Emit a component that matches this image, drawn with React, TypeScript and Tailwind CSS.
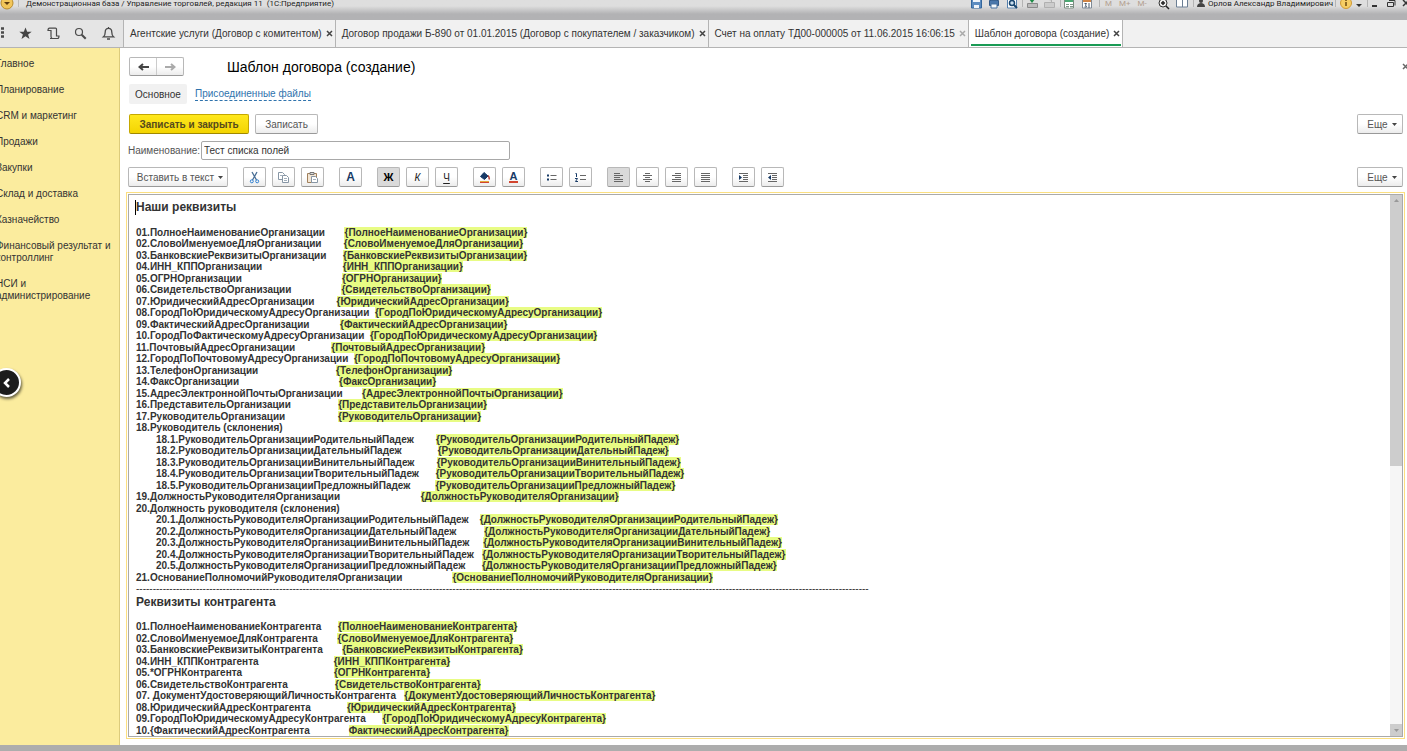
import clsx from "clsx";
import { FC, ReactNode } from "react";

interface ITab {
  title: string;
  active?: boolean;
  muted?: boolean;
}

interface IRow {
  label: string;
  gap?: number;
  field?: string;
  nested?: boolean;
}

const tabs: ITab[] = [
  { title: "Агентские услуги (Договор с комитентом)" },
  { title: "Договор продажи Б-890 от 01.01.2015 (Договор с покупателем / заказчиком)" },
  { title: "Счет на оплату ТД00-000005 от 11.06.2015 16:06:15", muted: true },
  { title: "Шаблон договора (создание)", active: true },
];

const sections = [
  "Главное",
  "Планирование",
  "CRM и маркетинг",
  "Продажи",
  "Закупки",
  "Склад и доставка",
  "Казначейство",
  "Финансовый результат и контроллинг",
  "НСИ и администрирование",
];

// gap is the number of spaces typed between the label and the field
const ownRows: IRow[] = [
  { label: "01.ПолноеНаименованиеОрганизации", gap: 7, field: "{ПолноеНаименованиеОрганизации}" },
  { label: "02.СловоИменуемоеДляОрганизации", gap: 8, field: "{СловоИменуемоеДляОрганизации}" },
  { label: "03.БанковскиеРеквизитыОрганизации", gap: 6, field: "{БанковскиеРеквизитыОрганизации}" },
  { label: "04.ИНН_КППОрганизации", gap: 29, field: "{ИНН_КППОрганизации}" },
  { label: "05.ОГРНОрганизации", gap: 36, field: "{ОГРНОрганизации}" },
  { label: "06.СвидетельствоОрганизации", gap: 18, field: "{СвидетельствоОрганизации}" },
  { label: "07.ЮридическийАдресОрганизации", gap: 8, field: "{ЮридическийАдресОрганизации}" },
  { label: "08.ГородПоЮридическомуАдресуОрганизации", gap: 2, field: "{ГородПоЮридическомуАдресуОрганизации}" },
  { label: "09.ФактическийАдресОрганизации", gap: 11, field: "{ФактическийАдресОрганизации}" },
  { label: "10.ГородПоФактическомуАдресуОрганизации", gap: 2, field: "{ГородПоЮридическомуАдресуОрганизации}" },
  { label: "11.ПочтовыйАдресОрганизации", gap: 13, field: "{ПочтовыйАдресОрганизации}" },
  { label: "12.ГородПоПочтовомуАдресуОрганизации", gap: 2, field: "{ГородПоПочтовомуАдресуОрганизации}" },
  { label: "13.ТелефонОрганизации", gap: 28, field: "{ТелефонОрганизации}" },
  { label: "14.ФаксОрганизации", gap: 36, field: "{ФаксОрганизации}" },
  { label: "15.АдресЭлектроннойПочтыОрганизации", gap: 7, field: "{АдресЭлектроннойПочтыОрганизации}" },
  { label: "16.ПредставительОрганизации", gap: 17, field: "{ПредставительОрганизации}" },
  { label: "17.РуководительОрганизации", gap: 19, field: "{РуководительОрганизации}" },
  { label: "18.Руководитель (склонения)" },
  { label: "18.1.РуководительОрганизацииРодительныйПадеж", gap: 8, field: "{РуководительОрганизацииРодительныйПадеж}", nested: true },
  { label: "18.2.РуководительОрганизацииДательныйПадеж", gap: 13, field: "{РуководительОрганизацииДательныйПадеж}", nested: true },
  { label: "18.3.РуководительОрганизацииВинительныйПадеж", gap: 8, field: "{РуководительОрганизацииВинительныйПадеж}", nested: true },
  { label: "18.4.РуководительОрганизацииТворительныйПадеж", gap: 6, field: "{РуководительОрганизацииТворительныйПадеж}", nested: true },
  { label: "18.5.РуководительОрганизацииПредложныйПадеж", gap: 9, field: "{РуководительОрганизацииПредложныйПадеж}", nested: true },
  { label: "19.ДолжностьРуководителяОрганизации", gap: 29, field: "{ДолжностьРуководителяОрганизации}" },
  { label: "20.Должность руководителя (склонения)" },
  { label: "20.1.ДолжностьРуководителяОрганизацииРодительныйПадеж", gap: 4, field: "{ДолжностьРуководителяОрганизацииРодительныйПадеж}", nested: true },
  { label: "20.2.ДолжностьРуководителяОрганизацииДательныйПадеж", gap: 10, field: "{ДолжностьРуководителяОрганизацииДательныйПадеж}", nested: true },
  { label: "20.3.ДолжностьРуководителяОрганизацииВинительныйПадеж", gap: 5, field: "{ДолжностьРуководителяОрганизацииВинительныйПадеж}", nested: true },
  { label: "20.4.ДолжностьРуководителяОрганизацииТворительныйПадеж", gap: 3, field: "{ДолжностьРуководителяОрганизацииТворительныйПадеж}", nested: true },
  { label: "20.5.ДолжностьРуководителяОрганизацииПредложныйПадеж", gap: 6, field: "{ДолжностьРуководителяОрганизацииПредложныйПадеж}", nested: true },
  { label: "21.ОснованиеПолномочийРуководителяОрганизации", gap: 18, field: "{ОснованиеПолномочийРуководителяОрганизации}" },
];

const partnerRows: IRow[] = [
  { label: "01.ПолноеНаименованиеКонтрагента", gap: 6, field: "{ПолноеНаименованиеКонтрагента}" },
  { label: "02.СловоИменуемоеДляКонтрагента", gap: 7, field: "{СловоИменуемоеДляКонтрагента}" },
  { label: "03.БанковскиеРеквизитыКонтрагента", gap: 7, field: "{БанковскиеРеквизитыКонтрагента}" },
  { label: "04.ИНН_КППКонтрагента", gap: 27, field: "{ИНН_КППКонтрагента}" },
  { label: "05.*ОГРНКонтрагента", gap: 33, field: "{ОГРНКонтрагента}" },
  { label: "06.СвидетельствоКонтрагента", gap: 17, field: "{СвидетельствоКонтрагента}" },
  { label: "07. ДокументУдостоверяющийЛичностьКонтрагента", gap: 3, field: "{ДокументУдостоверяющийЛичностьКонтрагента}" },
  { label: "08.ЮридическийАдресКонтрагента", gap: 13, field: "{ЮридическийАдресКонтрагента}" },
  { label: "09.ГородПоЮридическомуАдресуКонтрагента", gap: 6, field: "{ГородПоЮридическомуАдресуКонтрагента}" },
  { label: "10.{ФактическийАдресКонтрагента", gap: 14, field: "ФактическийАдресКонтрагента}" },
];

const Rows: FC<{ rows: IRow[] }> = ({ rows }) => (
  <>
    {rows.map((row) => (
      <p key={row.label} className={clsx("whitespace-pre", row.nested && "pl-5")}>
        {row.label}
        {row.field && (
          <>
            {" ".repeat(row.gap ?? 1)}
            <span className="bg-[#e8fc84]">{row.field}</span>
          </>
        )}
      </p>
    ))}
  </>
);

const Caret: FC = () => (
  <svg viewBox="0 0 5 3" className="h-[3px] w-[5px] shrink-0" fill="#444" aria-hidden="true">
    <path d="M0 0h5L2.500 3z" />
  </svg>
);

const Cross: FC = () => (
  <svg viewBox="0 0 7 7" className="size-[7px] shrink-0" fill="none" stroke="currentColor" strokeWidth="1.5" aria-hidden="true">
    <path d="M1 1l5 5M6 1L1 6" />
  </svg>
);

const buttonLook =
  "flex h-5 shrink-0 items-center justify-center rounded-[2px] border border-[#b8b8b8] border-b-[#999] bg-linear-to-b from-white from-50% to-[#ececec] whitespace-nowrap text-[#555]";

const MoreButton: FC = () => (
  <button type="button" className={clsx(buttonLook, "ml-auto w-[46px] gap-1 pl-1")}>
    Еще <Caret />
  </button>
);

interface IToolButton {
  label: string;
  pressed?: boolean;
  children: ReactNode;
}

const ToolButton: FC<IToolButton> = ({ label, pressed, children }) => (
  <button
    type="button"
    aria-label={label}
    aria-pressed={pressed}
    className={clsx(
      "flex h-5 w-[23px] shrink-0 items-center justify-center rounded-[2px] border border-[#b8b8b8] border-b-[#999] text-[#222]",
      pressed ? "bg-[#dadada]" : "bg-linear-to-b from-white from-50% to-[#ececec]"
    )}
  >
    {children}
  </button>
);

const ToolGroup: FC<{ children: ReactNode }> = ({ children }) => (
  <div className="flex gap-1.5">{children}</div>
);

const Glyph: FC<{ children: ReactNode }> = ({ children }) => (
  <svg viewBox="0 0 13 13" className="size-[13px]" fill="none" stroke="#666" aria-hidden="true">
    {children}
  </svg>
);

const TitleBar: FC = () => (
  <header className="h-5 shrink-0 overflow-hidden bg-linear-to-b from-[#dedede] from-30% to-[#b2b2b4] to-70% font-[Roboto,'Liberation_Sans',sans-serif] text-[8px] leading-2 text-[#222]">
    <div className="flex h-2 items-center whitespace-nowrap">
      <svg viewBox="0 0 26 12" className="h-3 w-[26px] shrink-0" aria-hidden="true">
        <circle cx="7" cy="5" r="6" fill="#f2c65a" stroke="#b98c2c" />
        <path d="M4 4h6L7 7z" fill="#5b3a10" />
        <path d="M18.500 0v9" stroke="#bbb" />
      </svg>
      <span className="grow">
        Демонстрационная база / Управление торговлей, редакция 11&nbsp; (1С:Предприятие)
      </span>
      <svg viewBox="0 0 136 12" className="h-3 w-[136px] shrink-0" fill="none" aria-hidden="true">
        <path d="M6.500 -1h10v11h-10z" fill="#5c8cc0" stroke="#33669c" />
        <path d="M8 -1h7v5H8zM9 7h5v3H9z" fill="#eef4fa" />
        <path d="M24.500 2.500h9v5h-9z" fill="#4b78ac" stroke="#335a88" />
        <path d="M26 -1h6v3h-6zM26 6h6v4h-6z" fill="#f4f8fb" stroke="#47709f" />
        <path d="M42.500 -1h9v11h-9z" fill="#fff" stroke="#5580ad" />
        <circle cx="47" cy="5" r="2.500" fill="#c9dded" stroke="#17456f" strokeWidth="1.500" />
        <path d="M49 7l3 3" stroke="#17456f" strokeWidth="2" />
        <path d="M57.500 0v9M95.500 0v9M134.500 0v9" stroke="#b4b4b4" />
        <path d="M62.500 5.500h10v4h-10z" fill="#bbb" stroke="#8a8a8a" />
        <path d="M64 1h6L67 5z" fill="#1d8b46" />
        <path d="M79.500 4.500h10v5h-10zM81.500 0h5v4" fill="#ccc" stroke="#b0b0b0" />
        <path d="M99.500 -1h9v11h-9z" fill="#fff" stroke="#7b8d80" />
        <path d="M100 0h8v4h-8z" fill="#4aa872" />
        <path d="M101 6.500h7M101 8.500h7" stroke="#7e9588" />
        <path d="M104.500 5v5" stroke="#fff" />
        <path d="M117.500 -1h9v11h-9z" fill="#fff" stroke="#7e8995" />
        <path d="M118 0h8v4h-8z" fill="#cf8445" />
        <path d="M119.500 5.500h2l-1 1.500 1 2h-2M124 5v5" stroke="#4a5a6c" />
      </svg>
      <div className="flex w-[55px] shrink-0 gap-[7px] pl-1 text-[#b39f90]">
        <span>M</span>
        <span>M+</span>
        <span>M-</span>
      </div>
      <svg viewBox="0 0 50 12" className="h-3 w-[50px] shrink-0" fill="none" aria-hidden="true">
        <circle cx="7" cy="5" r="4" fill="#eee" stroke="#333" />
        <path d="M5 5h4M7 3v4M10 8l3 3" stroke="#222" strokeWidth="1.500" />
        <path d="M20.500 -1h11v10h-11zM26.500 0v9" fill="#fff" stroke="#6c7f94" />
        <path d="M37.500 0v9" stroke="#b4b4b4" />
        <circle cx="45" cy="3" r="2" fill="#444" />
        <path d="M41 9c0-3 2-4 4-4s4 1 4 4z" fill="#444" />
      </svg>
      <span className="w-[129px] shrink-0 pl-0.5">Орлов Александр Владимирович</span>
      <svg viewBox="0 0 72 12" className="h-3 w-[72px] shrink-0" fill="none" aria-hidden="true">
        <path d="M0.500 0v9M32.500 0v9" stroke="#b4b4b4" />
        <circle cx="11" cy="5" r="5.500" fill="#f6cd63" stroke="#d09a36" />
        <path d="M11 4v4M11 1.500v1.500" stroke="#6f4a10" strokeWidth="1.500" />
        <path d="M21 6h6l-3 3z" fill="#333" />
        <path d="M37 8h5" stroke="#333" strokeWidth="2" />
        <path d="M52.500 4.500h6v4h-6zM54 2.500h6v5" stroke="#333" />
        <path d="M68 2l6 6M74 2l-6 6" stroke="#333" strokeWidth="1.500" />
      </svg>
    </div>
  </header>
);

const TabBar: FC = () => (
  <div className="flex h-7 shrink-0 border-b border-[#b4b4b4] bg-[#f1f1f1]">
    <div className="flex w-[123px] shrink-0 items-center bg-[#e5e5e5]">
      <svg viewBox="0 0 123 27" className="h-[27px] w-[123px]" fill="none" stroke="#4a4a4a" aria-hidden="true">
        <path d="M1 8.500h3M1 12.500h3M1 16.500h3" strokeWidth="2.500" />
        <path d="M25.500 7.500l1.700 4.200h4.500l-3.600 2.900 1.400 4.400-4-2.700-4 2.700 1.400-4.400-3.600-2.900h4.500z" fill="#444" stroke="none" />
        <path d="M50 18.500h7.500c1.500 0 1.500-1 1.500-2.500h-2.500V9c0-.6-.6-.9-1-.9h-6c-1.300 0-1.500 1-1.500 2.400h3v6c0 1.300.4 2 1.500 2" strokeWidth="1.200" />
        <circle cx="79" cy="12" r="3.500" strokeWidth="1.200" />
        <path d="M81.700 14.700l4 4" strokeWidth="2" />
        <path d="M103.500 16.800c1.500-1.200 1.700-2.500 1.700-4.500 0-2.300 1.200-3.900 3.300-3.900s3.300 1.600 3.300 3.900c0 2 .2 3.300 1.700 4.500zM107 19h3M108.500 7v1.500" strokeWidth="1.300" />
      </svg>
    </div>
    <nav className="flex" aria-label="Открытые окна">
      {tabs.map((tab) => (
        <div
          key={tab.title}
          className={clsx(
            "flex items-center gap-1 border-l border-[#b4b4b4] pr-0.5 pl-1.5 last:border-r",
            tab.active && "bg-white"
          )}
        >
          <a
            href="#"
            className={clsx(
              "whitespace-nowrap",
              tab.active && "relative after:absolute after:top-[18px] after:-right-3 after:-left-1 after:h-0.5 after:bg-[#1a9b55]"
            )}
          >
            {tab.title}
          </a>
          <button type="button" aria-label="Закрыть" className={tab.muted ? "text-[#aaa]" : "text-[#444]"}>
            <Cross />
          </button>
        </div>
      ))}
    </nav>
  </div>
);

const Sidebar: FC = () => (
  <aside className="relative w-[120px] shrink-0 border-r border-[#dccb7c] bg-[#fbec9e] pt-2.5">
    <nav className="-ml-1 flex flex-col gap-3.5 leading-3">
      {sections.map((section) => (
        <a key={section} href="#" className="pr-2">
          {section}
        </a>
      ))}
    </nav>
    <button
      type="button"
      aria-label="Свернуть панель"
      className="absolute top-80 -left-2 flex size-[29px] items-center justify-center rounded-full border-2 border-white bg-[#1c1c1c] shadow-[1px_2px_3px_rgba(0,0,0,0.6)]"
    >
      <svg viewBox="0 0 10 12" className="h-3 w-2.5" fill="none" stroke="#fff" strokeWidth="2.500" aria-hidden="true">
        <path d="M7 2L3 6l4 4" />
      </svg>
    </button>
  </aside>
);

const alignLines = [
  { label: "По левому краю", path: "M2 2.500h6M2 4.500h9M2 6.500h6M2 8.500h9M2 10.500h9", pressed: true },
  { label: "По центру", path: "M4 2.500h5M2 4.500h9M4 6.500h5M2 8.500h9M4 10.500h5" },
  { label: "По правому краю", path: "M5 2.500h6M2 4.500h9M5 6.500h6M2 8.500h9M2 10.500h9" },
  { label: "По ширине", path: "M2 2.500h9M2 4.500h9M2 6.500h9M2 8.500h9M2 10.500h9" },
];

const Toolbar: FC = () => (
  <div className="mt-[7px] flex gap-[15px] pr-1 pl-2">
    <button type="button" className={clsx(buttonLook, "w-[100px] gap-1 pl-1")}>
      Вставить в текст <Caret />
    </button>
    <ToolGroup>
      <ToolButton label="Вырезать">
        <Glyph>
          <path d="M4 1l4.500 8M9 1L4.500 9" stroke="#4a6f96" strokeWidth="1.300" />
          <circle cx="3.800" cy="10.300" r="1.500" stroke="#2f7fd0" />
          <circle cx="9.200" cy="10.300" r="1.500" stroke="#2f7fd0" />
        </Glyph>
      </ToolButton>
      <ToolButton label="Копировать">
        <Glyph>
          <path d="M1.500 1.500h4l2 2v5h-6z" fill="#fff" stroke="#8796a5" />
          <path d="M5.500 4.500h4l2 2v5h-6z" fill="#fff" stroke="#8796a5" />
          <path d="M7 7.500h3M7 9.500h3M3 4.500h2" stroke="#a3b0bd" />
        </Glyph>
      </ToolButton>
      <ToolButton label="Вставить">
        <Glyph>
          <path d="M1.500 2.500h9v9h-9z" fill="#f4e6d4" stroke="#a0805c" />
          <path d="M4 1.500h4v2H4z" fill="#ddd" stroke="#777" />
          <path d="M5.500 5.500h4l2 2v4h-6z" fill="#fff" stroke="#8796a5" />
          <path d="M7 8.500h3" stroke="#a3b0bd" />
        </Glyph>
      </ToolButton>
    </ToolGroup>
    <ToolButton label="Шрифт">
      <span className="text-[12px] font-bold text-[#173a66]">A</span>
    </ToolButton>
    <ToolGroup>
      <ToolButton label="Жирный" pressed>
        <span className="text-[11px] font-bold text-black">Ж</span>
      </ToolButton>
      <ToolButton label="Курсив">
        <span className="italic">К</span>
      </ToolButton>
      <ToolButton label="Подчеркнутый">
        <span className="underline underline-offset-2">Ч</span>
      </ToolButton>
    </ToolGroup>
    <ToolGroup>
      <ToolButton label="Цвет фона">
        <Glyph>
          <path d="M6 1.500l4 3.500L6.500 8.500 2.500 5.500z" fill="#173a66" stroke="#173a66" />
          <path d="M10 4.500c1.300 1 1.300 2 1.300 4" stroke="#b5382c" strokeWidth="1.500" />
          <path d="M2 10.500h9" stroke="#e2a93c" />
          <path d="M2 11.500h9" stroke="#d2452f" />
        </Glyph>
      </ToolButton>
      <ToolButton label="Цвет текста">
        <span className="border-b-2 border-[#d2452f] px-px text-[11px] leading-[10px] font-bold text-[#173a66]">A</span>
      </ToolButton>
    </ToolGroup>
    <ToolGroup>
      <ToolButton label="Маркированный список">
        <Glyph>
          <path d="M5.500 4.500h6M5.500 8.500h6" />
          <path d="M2 3.500h2v2H2zM2 7.500h2v2H2z" fill="#173a66" stroke="none" />
        </Glyph>
      </ToolButton>
      <ToolButton label="Нумерованный список">
        <Glyph>
          <path d="M6 4.500h6M6 8.500h6" />
          <path d="M1.500 2.500h1v3.500M1 7.500h2.500L1.500 10.500H4" stroke="#173a66" />
        </Glyph>
      </ToolButton>
    </ToolGroup>
    <ToolGroup>
      {alignLines.map((item) => (
        <ToolButton key={item.label} label={item.label} pressed={item.pressed}>
          <Glyph>
            <path d={item.path} />
          </Glyph>
        </ToolButton>
      ))}
    </ToolGroup>
    <ToolGroup>
      <ToolButton label="Увеличить отступ">
        <Glyph>
          <path d="M2 2.500h9M6 4.500h5M6 6.500h5M6 8.500h5M2 10.500h9" />
          <path d="M2 4l3 2.500L2 9z" fill="#173a66" stroke="none" />
        </Glyph>
      </ToolButton>
      <ToolButton label="Уменьшить отступ">
        <Glyph>
          <path d="M2 2.500h9M6 4.500h5M6 6.500h5M6 8.500h5M2 10.500h9" />
          <path d="M5 4L2 6.500 5 9z" fill="#173a66" stroke="none" />
        </Glyph>
      </ToolButton>
    </ToolGroup>
    <MoreButton />
  </div>
);

const Editor: FC = () => (
  <div className="mt-[5px] mr-0.5 mb-1.5 ml-1.5 flex min-h-0 grow border border-[#fbdf80] p-px">
    <div className="flex min-h-0 grow border border-[#aaa]">
      <div
        role="textbox"
        aria-label="Текст шаблона"
        aria-multiline="true"
        className="min-w-0 grow overflow-hidden px-[7px] pt-[5px] leading-[1.15] font-bold"
      >
        <h2 className="-ml-px border-l border-black text-xs leading-[15px]">Наши реквизиты</h2>
        <br />
        <Rows rows={ownRows} />
        <p className="font-normal whitespace-nowrap">{"-".repeat(220)}</p>
        <h2 className="text-xs leading-[15px]">Реквизиты контрагента</h2>
        <br />
        <Rows rows={partnerRows} />
      </div>
      <div className="flex w-3 shrink-0 flex-col justify-between bg-[#f6f6f6]" aria-hidden="true">
        <div className="flex h-1/2 justify-center bg-[#cdcdcd] pt-1">
          <svg viewBox="0 0 5 3" className="h-[3px] w-[5px]" fill="#999">
            <path d="M0 3h5L2.500 0z" />
          </svg>
        </div>
        <div className="flex h-3 items-center justify-center bg-[#cdcdcd]">
          <svg viewBox="0 0 5 3" className="h-[3px] w-[5px]" fill="#999">
            <path d="M0 0h5L2.500 3z" />
          </svg>
        </div>
      </div>
    </div>
  </div>
);

const App: FC = () => (
  <div className="flex h-screen flex-col overflow-hidden bg-white font-['Liberation_Sans',Arial,sans-serif] text-[10px] text-[#333]">
    <TitleBar />
    <TabBar />
    <div className="flex min-h-0 grow">
      <Sidebar />
      <main className="flex min-w-0 grow flex-col overflow-hidden pt-[9px]">
        <div className="flex h-[19px] items-center pl-[9px]">
          <div className="flex h-[19px] w-[55px] rounded-[2px] border border-[#b8b8b8] border-b-[#999] bg-linear-to-b from-white from-50% to-[#ececec]">
            <button type="button" aria-label="Назад" className="flex flex-1 items-center justify-center border-r border-[#ccc]">
              <svg viewBox="0 0 11 8" className="h-2 w-[11px]" fill="none" stroke="#444" strokeWidth="2" aria-hidden="true">
                <path d="M11 4H2M5 1L1.500 4 5 7" />
              </svg>
            </button>
            <button type="button" aria-label="Вперед" className="flex flex-1 items-center justify-center">
              <svg viewBox="0 0 11 8" className="h-2 w-[11px]" fill="none" stroke="#aaa" strokeWidth="2" aria-hidden="true">
                <path d="M0 4h9M6 1l3.500 3L6 7" />
              </svg>
            </button>
          </div>
          <h1 className="ml-[43px] grow text-sm text-black">Шаблон договора (создание)</h1>
          <button type="button" aria-label="Закрыть форму" className="-mr-0.5 text-[#666]">
            <Cross />
          </button>
        </div>
        <nav className="mt-2 flex items-center gap-2 pl-[9px]">
          <a href="#" className="flex h-5 w-[58px] items-center justify-center rounded-[2px] bg-[#f1f1f1]">
            Основное
          </a>
          <a href="#" className="border-b border-dashed border-[#2f73ad] leading-3 text-[#2f73ad]">
            Присоединенные файлы
          </a>
        </nav>
        <div className="mt-2.5 flex gap-1.5 pr-1 pl-[9px]">
          <button
            type="button"
            className="h-5 w-[120px] rounded-[2px] border border-[#c5a800] border-b-[#a08800] bg-linear-to-b from-[#ffe81c] to-[#f3d400] font-bold text-[#554a1c]"
          >
            Записать и закрыть
          </button>
          <button type="button" className={clsx(buttonLook, "w-[63px]")}>
            Записать
          </button>
          <MoreButton />
        </div>
        <div className="mt-[7px] flex items-center pl-2">
          <label htmlFor="name" className="w-[73px] text-[#555]">
            Наименование:
          </label>
          <input
            id="name"
            type="text"
            defaultValue="Тест списка полей"
            className="h-[19px] w-[309px] rounded-[2px] border border-[#a8a8a8] px-0.5 outline-none"
          />
        </div>
        <Toolbar />
        <Editor />
      </main>
    </div>
    <footer className="h-1.5 shrink-0 bg-[#adadad]" />
  </div>
);

export default App;
